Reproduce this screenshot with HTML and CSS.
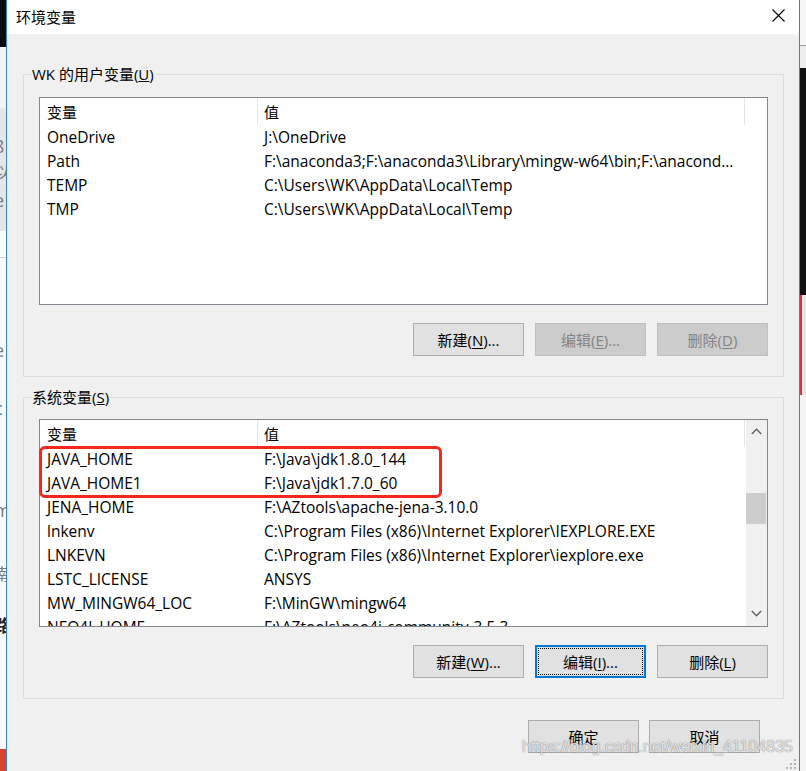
FILE: index.html
```html
<!DOCTYPE html>
<html lang="zh-CN">
<head>
<meta charset="utf-8">
<title>环境变量</title>
<link rel="stylesheet" href="styles.css">
</head>
<body>
<div class="screen">
  <div class="bg-left">
    <div class="bl-black"></div>
    <div class="bl-light"></div>
    <div class="bl-gray"><span class="frag f1">8</span><span class="frag f2">以</span><span class="frag f3">e</span></div>
    <div class="bl-white"><span class="frag f4">e</span><span class="frag f5">c</span><span class="frag f6">m</span><span class="frag f7">南</span><span class="frag f8">路</span></div>
    <div class="bl-red"></div>
  </div>

  <div class="dialog">
    <div class="titlebar">
      <span class="title">环境变量</span>
      <svg class="close" width="13" height="13" viewBox="0 0 13 13"><path d="M0.5 0.5 L12.5 12.5 M12.5 0.5 L0.5 12.5" stroke="#000" stroke-width="1.1" fill="none"/></svg>
    </div>

    <div class="body">
      <fieldset class="group g-user">
        <legend>WK 的用户变量(<u>U</u>)</legend>
        <div class="list">
          <div class="list-main">
            <div class="hdr"><div class="c1">变量</div><div class="c2">值</div></div>
            <div class="row"><div class="c1">OneDrive</div><div class="c2">J:\OneDrive</div></div>
            <div class="row"><div class="c1">Path</div><div class="c2">F:\anaconda3;F:\anaconda3\Library\mingw-w64\bin;F:\anacond...</div></div>
            <div class="row"><div class="c1">TEMP</div><div class="c2">C:\Users\WK\AppData\Local\Temp</div></div>
            <div class="row"><div class="c1">TMP</div><div class="c2">C:\Users\WK\AppData\Local\Temp</div></div>
          </div>
        </div>
        <div class="btns">
          <button class="btn">新建(<u>N</u>)...</button>
          <button class="btn disabled">编辑(<u>E</u>)...</button>
          <button class="btn disabled">删除(<u>D</u>)</button>
        </div>
      </fieldset>

      <fieldset class="group g-sys">
        <legend>系统变量(<u>S</u>)</legend>
        <div class="list">
          <div class="list-main">
            <div class="hdr"><div class="c1">变量</div><div class="c2">值</div></div>
            <div class="row"><div class="c1">JAVA_HOME</div><div class="c2">F:\Java\jdk1.8.0_144</div></div>
            <div class="row"><div class="c1">JAVA_HOME1</div><div class="c2">F:\Java\jdk1.7.0_60</div></div>
            <div class="row"><div class="c1">JENA_HOME</div><div class="c2">F:\AZtools\apache-jena-3.10.0</div></div>
            <div class="row"><div class="c1">lnkenv</div><div class="c2">C:\Program Files (x86)\Internet Explorer\IEXPLORE.EXE</div></div>
            <div class="row"><div class="c1">LNKEVN</div><div class="c2">C:\Program Files (x86)\Internet Explorer\iexplore.exe</div></div>
            <div class="row"><div class="c1">LSTC_LICENSE</div><div class="c2">ANSYS</div></div>
            <div class="row"><div class="c1">MW_MINGW64_LOC</div><div class="c2">F:\MinGW\mingw64</div></div>
            <div class="row"><div class="c1">NEO4J_HOME</div><div class="c2">F:\AZtools\neo4j-community-3.5.3</div></div>
          </div>
          <div class="vscroll">
            <div class="sb-btn"><svg width="11" height="7" viewBox="0 0 11 7"><polyline points="0.8,6 5.5,1.3 10.2,6" fill="none" stroke="#606060" stroke-width="1.4"/></svg></div>
            <div class="sb-track"><div class="sb-thumb"></div></div>
            <div class="sb-btn"><svg width="11" height="7" viewBox="0 0 11 7"><polyline points="0.8,1 5.5,5.7 10.2,1" fill="none" stroke="#606060" stroke-width="1.4"/></svg></div>
          </div>
          <div class="hl"></div>
        </div>
        <div class="btns">
          <button class="btn">新建(<u>W</u>)...</button>
          <button class="btn focused">编辑(<u>I</u>)...</button>
          <button class="btn">删除(<u>L</u>)</button>
        </div>
      </fieldset>

      <div class="footer">
        <button class="btn">确定</button>
        <button class="btn">取消</button>
      </div>
    </div>

    <div class="watermark">https://blog.csdn.net/weixin_41104835</div>
    <svg class="grip" width="12" height="12" viewBox="0 0 12 12">
      <rect x="8" y="0" width="2" height="2" fill="#b5b5b5"/>
      <rect x="4" y="4" width="2" height="2" fill="#b5b5b5"/>
      <rect x="8" y="4" width="2" height="2" fill="#b5b5b5"/>
      <rect x="0" y="8" width="2" height="2" fill="#b5b5b5"/>
      <rect x="4" y="8" width="2" height="2" fill="#b5b5b5"/>
      <rect x="8" y="8" width="2" height="2" fill="#b5b5b5"/>
    </svg>
  </div>

  <div class="bg-right">
    <div class="br-white"></div>
    <div class="br-light"></div>
    <div class="br-black"></div>
    <div class="br-blue"></div>
    <div class="br-rest"></div>
  </div>
</div>
</body>
</html>
```

FILE: styles.css
```css
* { box-sizing: border-box; }
html, body { margin: 0; padding: 0; }
body {
  width: 806px;
  height: 771px;
  overflow: hidden;
  background: #ffffff;
  color: #000;
  font-family: "Open Sans", "Noto Sans CJK SC", sans-serif;
  font-size: 15px;
}
.screen { display: flex; height: 771px; }

/* background app slivers */
.bg-left { width: 6px; flex: none; display: flex; flex-direction: column; overflow: hidden; }
.bl-black { height: 47px; background: #0b0b0b; }
.bl-light { height: 61px; background: #f3f3f3; }
.bl-gray { height: 123px; background: #e6e6e6; position: relative; overflow: hidden; }
.bl-white { flex: 1; background: #fafafa; border-top: 1px solid #cfcfcf; margin-top: 26px; position: relative; overflow: hidden; }
.bl-red { height: 22px; background: #d4472d; }
.frag { display: block; font-size: 18px; line-height: 20px; color: #7a7a7a; margin-left: -6px; }
.f1 { margin-top: 28px; }
.f2 { margin-top: 6px; font-size: 16px; }
.f3 { margin-top: 8px; }
.f4 { margin-top: 82px; }
.f5 { margin-top: 38px; color: #4a7ab0; }
.f6 { margin-top: 82px; }
.f7 { margin-top: 44px; font-size: 16px; }
.f8 { margin-top: 32px; font-weight: bold; color: #222; font-size: 17px; }

.bg-right { width: 6px; flex: none; display: flex; flex-direction: column; }
.br-white { height: 46px; background: #f7f7f7; border-bottom: 1px solid #9a9a9a; }
.br-light { height: 22px; background: #eeeeee; }
.br-black { height: 227px; background: #111111; }
.br-blue { height: 100px; background: #e3e6ea; border-left: 2px solid #d03a3a; }
.br-rest { flex: 1; background: #f4f4f4; }

/* dialog */
.dialog {
  width: 794px;
  flex: none;
  position: relative;
  display: flex;
  flex-direction: column;
  background: #f0f0f0;
  border-left: 1px solid #2d86d6;
  border-right: 1px solid #2d86d6;
}
.titlebar {
  height: 34px;
  flex: none;
  background: #ffffff;
  display: flex;
  align-items: center;
  padding: 0 14px 0 9px;
}
.title { font-size: 15px; line-height: 20px; }
.close { margin-left: auto; margin-top: -4px; }

.body { padding: 0 15px 0 16px; display: flex; flex-direction: column; }

.group {
  margin: 0;
  border: 1px solid #dcdcdc;
  padding: 13px 15px 20px;
  min-width: 0;
}
.g-user { margin-top: 30px; }
.g-sys { margin-top: 10px; padding-top: 12px; }
.group legend {
  font-size: 15px;
  line-height: 20px;
  padding: 0 2px 0 1px;
  margin-left: -8px;
}

.list {
  position: relative;
  height: 208px;
  border: 1px solid #828790;
  background: #ffffff;
  display: flex;
  overflow: visible;
}
.list-main { flex: 1; min-width: 0; overflow: hidden; }
.hdr { display: flex; height: 27px; }
.hdr .c1, .hdr .c2 { line-height: 25px; padding-top: 2px; font-size: 15px; }
.hdr .c2 { width: 487px; flex: none; border-right: 1px solid #e5e5e5; }
.c1 { width: 218px; flex: none; padding-left: 7px; border-right: 1px solid transparent; white-space: nowrap; overflow: hidden; }
.hdr .c1 { border-right-color: #e5e5e5; }
.c2 { padding-left: 6px; white-space: nowrap; overflow: hidden; }
.row { display: flex; height: 24px; line-height: 24px; font-size: 15.5px; }

.vscroll { width: 21px; flex: none; background: #f0f0f0; display: flex; flex-direction: column; }
.sb-btn { height: 21px; flex: none; display: flex; align-items: center; justify-content: center; }
.sb-btn:first-child { padding-top: 2px; }
.sb-btn:last-child { padding-bottom: 4px; }
.sb-track { flex: 1; }
.sb-thumb { margin-top: 52px; height: 31px; width: 20px; background: #cdcdcd; }

.hl {
  position: absolute;
  left: -1px;
  top: 26px;
  width: 403px;
  height: 52px;
  border: 3px solid #f3281d;
  border-radius: 6px;
}

.btns { display: flex; justify-content: flex-end; gap: 11px; margin-top: 18px; }
.btn {
  width: 111px;
  height: 33px;
  margin: 0;
  padding: 0;
  border: 1px solid #adadad;
  background: #e1e1e1;
  font-family: "Open Sans", "Noto Sans CJK SC", sans-serif;
  font-size: 15px;
  color: #000;
  line-height: 20px;
}
.btn u { text-underline-offset: 2px; }
.btn.disabled { background: #cccccc; border-color: #bfbfbf; color: #838383; }
.btn.focused { border: 2px solid #0078d7; outline: 1px dotted #000; outline-offset: -4px; }

.footer { display: flex; justify-content: flex-end; gap: 10px; margin-top: 21px; padding-right: 24px; }

.watermark {
  position: absolute;
  left: 515px;
  top: 737px;
  font-family: "Liberation Sans", Arial, sans-serif;
  font-size: 16px;
  line-height: 20px;
  color: rgba(255, 255, 255, 0.8);
  text-shadow: 0 0 1px rgba(80, 80, 80, 0.6), 0 0 1px rgba(80, 80, 80, 0.5);
  white-space: nowrap;
}
.grip { position: absolute; right: 1px; bottom: 0; }
```
